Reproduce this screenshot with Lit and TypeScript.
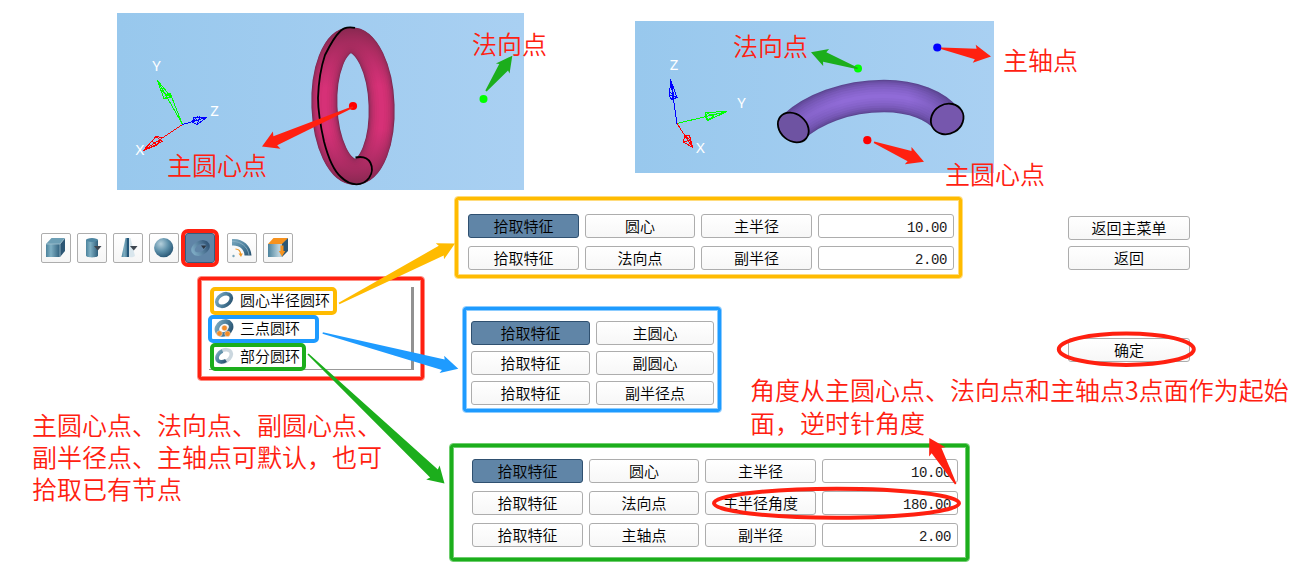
import { LitElement, html, css, svg } from "lit";
import { customElement, property } from "lit/decorators.js";
import { classMap } from "lit/directives/class-map.js";

type Point = [number, number];

interface Arrow {
  tail: Point;
  tip: Point;
  color: string;
  head?: number;
  half?: number;
  neck?: number;
}

const RED = "#ff2010";
const GREEN = "#1cae1c";
const BLUE = "#1e9bff";
const AMBER = "#ffbb00";

const ARROWS: Arrow[] = [
  { tail: [353, 107], tip: [262, 146.5], color: RED, half: 9.5, neck: 4.8 },
  { tail: [486, 91], tip: [512.3, 55.7], color: GREEN, half: 8.5, neck: 5.5 },
  { tail: [857.7, 68.5], tip: [811, 52.3], color: GREEN, half: 9, neck: 5 },
  { tail: [941, 48.3], tip: [991, 56.5], color: RED, head: 17, half: 9.2, neck: 5.4 },
  { tail: [874, 142.3], tip: [924, 161.7], color: RED, head: 17, half: 9.2, neck: 5.4 },
  { tail: [339, 303.5], tip: [455, 243.5], color: AMBER, head: 17, half: 9, neck: 5.4 },
  { tail: [322.7, 333], tip: [458.3, 368.7], color: BLUE, head: 17, half: 9, neck: 5.4 },
  { tail: [308, 354], tip: [444.5, 483.5], color: GREEN, head: 16, half: 9.7, neck: 5.6 },
  { tail: [955.7, 484], tip: [929.3, 438], color: RED, half: 9.4, neck: 5.6 },
];

const LABELS: { text: string; x: number; y: number }[] = [
  { text: "主圆心点", x: 167, y: 174.5 },
  { text: "法向点", x: 472, y: 54 },
  { text: "法向点", x: 733, y: 56 },
  { text: "主轴点", x: 1003, y: 70 },
  { text: "主圆心点", x: 945, y: 184 },
];

function arrowPoints({ tail, tip, head = 16, half = 9, neck = 5 }: Arrow): string {
  const dx = tip[0] - tail[0];
  const dy = tip[1] - tail[1];
  const len = Math.hypot(dx, dy);
  const ux = dx / len;
  const uy = dy / len;
  const at = (back: number, side: number) =>
    `${(tip[0] - ux * back - uy * side).toFixed(2)},${(tip[1] - uy * back + ux * side).toFixed(2)}`;
  return [
    at(0, 0), at(head, half), at(head - 1.5, neck), at(len, 0.8),
    at(len, -0.8), at(head - 1.5, -neck), at(head, -half),
  ].join(" ");
}

@customElement("ring-scene")
class RingScene extends LitElement {
  static styles = css`
    :host { display: block; width: 407px; height: 177px; }
    .view { display: block; }
    .axis { font: 15px "Noto Sans", sans-serif; fill: #fff; text-anchor: middle; }
  `;

  render() {
    const layers = [
      [26, "#7a2850"], [24.6, "#952c5b"], [22.6, "#a92d63"], [20, "#b82e69"],
      [17, "#c32f6d"], [13.5, "#cc3071"], [9.5, "#d23074"], [5, "#d63177"],
    ] as [number, string][];
    return html`<svg class="view" width="407" height="177" viewBox="117 13 407 177">
      <defs>
        <linearGradient id="sky"><stop offset="0" stop-color="#98c8ed" /><stop offset="1" stop-color="#a9d0f2" /></linearGradient>
        <linearGradient id="dim" gradientUnits="userSpaceOnUse" x1="0" y1="27" x2="0" y2="185">
          <stop offset="0" stop-color="#86284f" stop-opacity=".9" />
          <stop offset=".16" stop-color="#9a2a58" stop-opacity=".6" />
          <stop offset=".38" stop-color="#a02b60" stop-opacity="0" />
          <stop offset=".65" stop-color="#a02b60" stop-opacity="0" />
          <stop offset=".85" stop-color="#98295a" stop-opacity=".6" />
          <stop offset="1" stop-color="#84284f" stop-opacity=".9" />
        </linearGradient>
      </defs>
      <rect x="117" y="13" width="407" height="177" fill="url(#sky)" />
      <g fill="none" transform="rotate(-2.2 353 106)">
        ${layers.map(([w, c]) => svg`<ellipse cx="353" cy="106" rx="28.6" ry="65.8" stroke=${c} stroke-width=${w} />`)}
      </g>
      <ellipse cx="353" cy="106" rx="28.6" ry="65.8" fill="none" stroke="url(#dim)" stroke-width="25.6" transform="rotate(-2.2 353 106)" />
      <path fill="none" stroke="#000" stroke-width="1.8" d="M355 27.800C348 26.500 343 28 340 31.500C334 37 328 49 325 55C321 67 318.500 83 318 98C318 110 321 128 324 141.500C328 157 334 171 341 177C346 182 351 184.300 356.500 184.300C362 184.300 366 182 369 178C372.500 173 373 168 370.500 163C368 158 363 156 355.500 157.500" />
      <circle cx="353" cy="106" r="4.100" fill="#f00" />
      <circle cx="483.500" cy="99" r="4" fill="#0f0" />
      <g fill="none" stroke-width="1" shape-rendering="crispEdges">
        <path stroke="#0f0" d="M182.500 124.500L157.500 80.500L164 99L170 93Z M157.500 80.500L171 97L164 99M157.500 80.500L167 98M161 90L170 97" />
        <path stroke="#f00" d="M182.500 124.500L143.500 150.500M143.500 150.500L156 136.500L162 141.500ZM143.500 150.500L156 145.500L162 137.500L156 136.500M151 141L158 145" />
        <path stroke="#00f" d="M182.500 124.500L206.500 117.500M206.500 117.500L194 117L192.500 122L197 124.500ZM194 117L199 122M198 116L192.500 122M200 116L197 124.500" />
      </g>
      <text class="axis" x="156.500" y="71">Y</text>
      <text class="axis" x="140" y="155">X</text>
      <text class="axis" x="214.500" y="116">Z</text>
    </svg>`;
  }
}

@customElement("arc-scene")
class ArcScene extends LitElement {
  static styles = css`
    :host { display: block; width: 359px; height: 152px; }
    .view { display: block; }
    .axis { font: 15px "Noto Sans", sans-serif; fill: #fff; text-anchor: middle; }
  `;

  render() {
    const layers = [
      [32.5, "#5b4590"], [30.5, "#674da0"], [27.5, "#7154ae"], [23.5, "#7a5aba"],
      [19, "#8160c4"], [14, "#8764cc"], [9, "#8c68d2"], [4, "#906bd7"],
    ] as [number, string][];
    const spine = "M793.5 127C812 110 845 96 884 96C914 96 936 106 946.500 119";
    return html`<svg class="view" width="359" height="152" viewBox="635 21 359 152">
      <defs>
        <linearGradient id="sky"><stop offset="0" stop-color="#98c8ed" /><stop offset="1" stop-color="#a9d0f2" /></linearGradient>
        <linearGradient id="dim" gradientUnits="userSpaceOnUse" x1="778" y1="0" x2="964" y2="0">
          <stop offset="0" stop-color="#54408a" stop-opacity=".3" /><stop offset=".35" stop-color="#54408a" stop-opacity="0" />
          <stop offset=".7" stop-color="#54408a" stop-opacity="0" /><stop offset="1" stop-color="#54408a" stop-opacity=".6" />
        </linearGradient>
      </defs>
      <rect x="635" y="21" width="359" height="152" fill="url(#sky)" />
      <g fill="none">
        ${layers.map(([w, c]) => svg`<path d=${spine} stroke=${c} stroke-width=${w} />`)}
        <path d=${spine} stroke="url(#dim)" stroke-width="32.500" />
      </g>
      <ellipse cx="793.300" cy="127.500" rx="16.800" ry="13.200" transform="rotate(40 793.3 127.5)" fill="#6e53a2" stroke="#000" stroke-width="1.800" />
      <ellipse cx="947.200" cy="119" rx="16.800" ry="14.800" transform="rotate(-30 947.2 119)" fill="#7657ad" stroke="#000" stroke-width="1.800" />
      <circle cx="858" cy="68.500" r="4" fill="#0f0" />
      <circle cx="937.300" cy="47.500" r="4.100" fill="#00f" />
      <circle cx="867.300" cy="140.200" r="4.100" fill="#f00" />
      <g fill="none" stroke-width="1" shape-rendering="crispEdges">
        <path stroke="#00f" d="M677 123.500L670.500 79.500M670.500 79.500L669.500 96.500L672 100L677 97.500ZM670.500 79.500L673.500 95L669.500 92M673.500 95L672 100M677 97.500L669.500 95" />
        <path stroke="#0f0" d="M677 123.500L727 111.500M727 111.500L705.500 112.500L707.500 120.500ZM705.500 112.500L714 116L707.500 120.500L705.500 117ZM727 111.500L709 116" />
        <path stroke="#f00" d="M677 123.500L692.500 147.500M692.500 147.500L683.500 142L684.500 135.500L689.500 135.500ZM683.500 142L690 140L684.500 135.500M690 140L692.500 147.500L686 137" />
      </g>
      <text class="axis" x="674" y="70">Z</text>
      <text class="axis" x="741.500" y="108">Y</text>
      <text class="axis" x="700.500" y="153">X</text>
    </svg>`;
  }
}

const steel = svg`<defs>
  <linearGradient id="s" x1="0" y1="0" x2="1" y2="1"><stop offset="0" stop-color="#7fabc0" /><stop offset=".5" stop-color="#4f829f" /><stop offset="1" stop-color="#28516e" /></linearGradient>
  <linearGradient id="h"><stop offset="0" stop-color="#4b829c" /><stop offset=".35" stop-color="#7fb0c4" /><stop offset="1" stop-color="#2f5f7c" /></linearGradient>
  <linearGradient id="p"><stop offset="0" stop-color="#7ba8c2" /><stop offset="1" stop-color="#34587a" /></linearGradient>
  <linearGradient id="f"><stop offset="0" stop-color="#4b829c" /><stop offset=".8" stop-color="#bcd3de" /><stop offset="1" stop-color="#a9c5d2" /></linearGradient>
  <radialGradient id="r" cx=".35" cy=".3" r=".8"><stop offset="0" stop-color="#b5d0dc" /><stop offset=".5" stop-color="#5c8fa9" /><stop offset="1" stop-color="#1f4c6b" /></radialGradient>
</defs>`;

const TOOL_ICONS = [
  svg`<path fill="#6d9fb5" d="M5 11L10.500 5H24L19 11Z"/><path fill="url(#h)" d="M5 11H19V24H5Z"/><path fill="#2c5674" d="M19 11L24 5V18L19 24Z"/><path fill="none" stroke="#a4c3d0" stroke-width=".8" d="M5 11H19L24 5M19 11V24"/>`,
  svg`<path fill="url(#h)" d="M9 7V22.500C9 25 21 25 21 22.500V7Z"/><ellipse cx="15" cy="7" rx="6" ry="1.900" fill="#4e86a2"/><path fill="#3e4650" d="M17 13H24.500L20.800 17.500Z"/>`,
  svg`<path fill="url(#h)" d="M12.500 5H16V24H8.500Z"/><path fill="#24577a" d="M14 5H16V24H14Z"/><path fill="#d9e6ed" d="M16 5H17.500L22 23C20 24.500 18 24.500 16 24Z"/><path fill="#3e4650" d="M17 13H24.500L20.800 17.500Z"/>`,
  svg`<circle cx="14.700" cy="14.700" r="9.600" fill="url(#r)"/>`,
  svg`<ellipse cx="15.500" cy="15" rx="8" ry="5.400" transform="rotate(-28 15.5 15)" fill="none" stroke="url(#p)" stroke-width="3.600"/><path fill="#2b3440" d="M16 12.500H21.500L18.700 16Z"/>`,
  svg`<path fill="url(#s)" d="M5 6C15 5 24 12 24.500 22.500H17.500C17.500 16 12 12 5 12.500Z"/><path fill="none" stroke="#8fb4c6" stroke-width=".8" d="M5 8.500C14 8 21 14 22 22"/><path fill="none" stroke="#f29620" stroke-width="1.200" d="M8.500 16C12 16 13.500 18.500 13.700 21.500"/><path fill="#f29620" d="M11.500 20.500L15.800 20.500L14 24Z"/><circle cx="6.500" cy="23" r="1.200" fill="#79a6ba"/>`,
  svg`<path fill="#f6921e" d="M5 11L10.500 5H25L20 11Z"/><path fill="url(#f)" d="M5 11H19V24H5Z"/><path fill="#2c5674" d="M19 11L25 5V18L19 24Z"/><path fill="#f6921e" d="M17.500 12.500H20.500V18H22.300L19 23.500L15.800 18H17.500Z"/>`,
];

@customElement("shape-toolbar")
class ShapeToolbar extends LitElement {
  static styles = css`
    :host { display: flex; gap: 6px; height: 30px; }
    .tool { box-sizing: border-box; width: 30px; height: 30px; padding: 0; border: 1px solid #adadad; border-radius: 2px; background: linear-gradient(#fff, #f5f5f5); }
    .tool.active { background: #6085a7; border-color: #375a7c; margin-right: 6px; outline: 4px solid #ff2010; outline-offset: 0; border-radius: 3px; }
    .icon { display: block; margin: -1px; }
  `;

  render() {
    return TOOL_ICONS.map((icon, i) => html`<button class=${classMap({ tool: true, active: i === 4 })}>
      <svg class="icon" width="30" height="30" viewBox="0 0 30 30">${steel}${icon}</svg>
    </button>`);
  }
}

@customElement("torus-menu")
class TorusMenu extends LitElement {
  static styles = css`
    :host { display: block; box-sizing: border-box; width: 228px; height: 105px; padding: 10px 9px 10px 11px; border-radius: 4px; border: 1px solid #ff8a80; box-shadow: inset 0 0 0 3px #ff2010, inset 0 0 0 4px #ff8a80; }
    .list { box-sizing: border-box; width: 205px; height: 83px; border-right: 3px solid #929292; border-bottom: 1px solid #999; display: flex; flex-direction: column; align-items: flex-start; }
    .item { box-sizing: border-box; height: 28px; flex: none; display: flex; align-items: center; gap: 5px; border: 4px solid; border-radius: 5px; margin-left: 1px; }
    .amber { border-color: #ffbb00; width: 127px; }
    .blue { border-color: #1e9bff; width: 111px; margin-left: -1px; padding-left: 2px; }
    .green { border-color: #1cae1c; width: 96px; }
    .label { font: 350 15px/20px "Noto Sans CJK SC", sans-serif; color: #000; white-space: nowrap; margin-top: -3px; }
    .icon { flex: none; margin-top: -3px; padding-right: 1px; }
  `;

  render() {
    const ring = svg`<ellipse cx="10" cy="10" rx="7.900" ry="5.600" transform="rotate(-32 10 10)" fill="none" stroke="url(#s)" stroke-width="3.600"/>`;
    const balls = svg`<ellipse cx="10" cy="10" rx="7.500" ry="6" transform="rotate(-32 10 10)" fill="none" stroke="url(#s)" stroke-width="4.600"/><g fill="#f28c28" stroke="#e8edf0" stroke-width=".5"><circle cx="10.500" cy="10" r="2.800"/><circle cx="5.500" cy="15.500" r="2.800"/><circle cx="13.500" cy="15.800" r="2.800"/></g>`;
    const part = svg`<ellipse cx="10" cy="10" rx="7.900" ry="5.600" transform="rotate(-32 10 10)" fill="none" stroke="#cbd7df" stroke-width="3.600"/><path d="M8.500 5C4.500 6.500 2 11 3.500 14C5 16.500 9 16.300 12 14.500" fill="none" stroke="url(#s)" stroke-width="3.600"/>`;
    const row = (tone: string, icon: unknown, text: string) => html`<div class="item ${tone}">
      <svg class="icon" width="20" height="20" viewBox="0 0 20 20">${steel}${icon}</svg><span class="label">${text}</span>
    </div>`;
    return html`<div class="list">
      ${row("amber", ring, "圆心半径圆环")}
      ${row("blue", balls, "三点圆环")}
      ${row("green", part, "部分圆环")}
    </div>`;
  }
}

const controls = css`
  .btn, .field { box-sizing: border-box; height: 24px; border: 1px solid #adadad; border-radius: 3px; color: #000; margin: 0; }
  .btn { padding: 0; background: linear-gradient(#fff, #f7f7f7); font: 350 15px/22px "Noto Sans CJK SC", sans-serif; text-align: center; white-space: nowrap; }
  .btn.on { background: #6085a7; border-color: #2f5070; }
  .field { background: #fff; padding: 1px 6px 0 0; font: 14px/24px "Liberation Mono", monospace; letter-spacing: -0.4px; color: #1a1a1a; text-align: right; }
`;

@customElement("pick-panel")
class PickPanel extends LitElement {
  @property({ attribute: false }) rows: string[][] = [];
  @property({ reflect: true }) tone = "amber";

  static styles = [
    controls,
    css`
      :host { display: block; box-sizing: border-box; flex: none; border-radius: 4px; border: 1px solid var(--edge); box-shadow: inset 0 0 0 3px var(--line), inset 0 0 0 4px var(--edge); }
      :host([tone="amber"]) { --line: #ffbb00; --edge: #ffdc7d; width: 509px; height: 83px; padding: 17px 13px; }
      :host([tone="blue"]) { --line: #1e9bff; --edge: #8cccff; width: 260px; height: 107px; padding: 14px 8px; }
      :host([tone="green"]) { --line: #1cae1c; --edge: #6fce6f; width: 521px; height: 119px; padding: 15px 22px; }
      .grid { display: grid; grid-template-columns: 111px 110px 111px 136px; gap: 8px 6px; }
      :host([tone="blue"]) .grid { grid-template-columns: 119px 118px; gap: 6px; }
    `,
  ];

  render() {
    return html`<div class="grid">
      ${this.rows.map((row, r) => row.map((cell, c) =>
        c === 3
          ? html`<div class="field">${cell}</div>`
          : html`<button class=${classMap({ btn: true, on: r === 0 && c === 0 })}>${cell}</button>`))}
    </div>`;
  }
}

@customElement("app-root")
class AppRoot extends LitElement {
  static styles = [
    controls,
    css`
      :host { display: block; position: relative; width: 1312px; height: 574px; overflow: hidden; background: #fff; }
      .scenes { box-sizing: border-box; height: 190px; padding: 13px 0 0 117px; display: flex; align-items: flex-start; gap: 111px; }
      .second { margin-top: 8px; }
      .work { display: flex; }
      .left { width: 449px; flex: none; padding-top: 43px; }
      .tools { padding-left: 41px; }
      .menu { margin: 13px 0 0 197px; }
      .note { color: #ff2010; font: 350 25px/32px "Noto Sans CJK SC", sans-serif; white-space: nowrap; margin: 0; }
      .left .note { margin: 27px 0 0 32px; }
      .right { flex: 1; padding-top: 6px; }
      .row { display: flex; align-items: flex-start; }
      .first { height: 110px; padding-left: 5px; }
      .middle { height: 137px; padding-left: 13px; }
      .actions { display: flex; flex-direction: column; gap: 6px; margin: 20px 0 0 105px; }
      .wide { width: 122px; }
      .side { display: flex; flex-direction: column; align-items: flex-start; margin-left: 28px; padding-top: 32px; gap: 11px; }
      .side .wide { margin-left: 318px; }
      .side .note { line-height: 33px; }
      .marks { position: absolute; left: 0; top: 0; pointer-events: none; }
      .tag { font: 350 25px "Noto Sans CJK SC", sans-serif; fill: #ff2010; }
    `,
  ];

  render() {
    return html`
      <div class="scenes">
        <ring-scene></ring-scene>
        <arc-scene class="second"></arc-scene>
      </div>
      <div class="work">
        <div class="left">
          <shape-toolbar class="tools"></shape-toolbar>
          <torus-menu class="menu"></torus-menu>
          <p class="note">主圆心点、法向点、副圆心点、<br />副半径点、主轴点可默认，也可<br />拾取已有节点</p>
        </div>
        <div class="right">
          <div class="row first">
            <pick-panel tone="amber" .rows=${[
              ["拾取特征", "圆心", "主半径", "10.00"],
              ["拾取特征", "法向点", "副半径", "2.00"],
            ]}></pick-panel>
            <div class="actions">
              <button class="btn wide">返回主菜单</button>
              <button class="btn wide">返回</button>
            </div>
          </div>
          <div class="row middle">
            <pick-panel tone="blue" .rows=${[
              ["拾取特征", "主圆心"],
              ["拾取特征", "副圆心"],
              ["拾取特征", "副半径点"],
            ]}></pick-panel>
            <div class="side">
              <button class="btn wide">确定</button>
              <p class="note">角度从主圆心点、法向点和主轴点3点面作为起始<br />面，逆时针角度</p>
            </div>
          </div>
          <pick-panel tone="green" .rows=${[
            ["拾取特征", "圆心", "主半径", "10.00"],
            ["拾取特征", "法向点", "主半径角度", "180.00"],
            ["拾取特征", "主轴点", "副半径", "2.00"],
          ]}></pick-panel>
        </div>
      </div>
      <svg class="marks" width="1312" height="574" viewBox="0 0 1312 574">
        ${LABELS.map((l) => svg`<text class="tag" x=${l.x} y=${l.y}>${l.text}</text>`)}
        ${ARROWS.map((a) => svg`<polygon points=${arrowPoints(a)} fill=${a.color} />`)}
        <g fill="none" stroke="#ff2010" stroke-width="4">
          <ellipse cx="1126.300" cy="349.200" rx="67.500" ry="15.700" />
          <ellipse cx="836.500" cy="503.200" rx="122.500" ry="14.500" />
        </g>
      </svg>
    `;
  }
}
